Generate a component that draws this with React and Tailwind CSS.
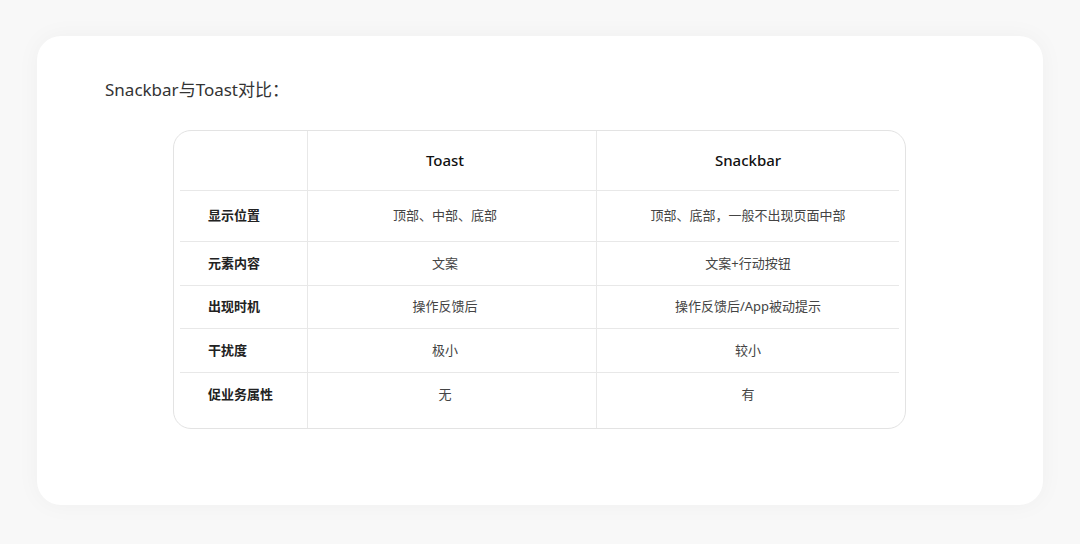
const rows = [
  ["显示位置", "顶部、中部、底部", "顶部、底部，一般不出现页面中部", "h-[51px]", ""],
  ["元素内容", "文案", "文案+行动按钮", "h-[44px]", ""],
  ["出现时机", "操作反馈后", "操作反馈后/App被动提示", "h-[43px]", ""],
  ["干扰度", "极小", "较小", "h-[44px]", ""],
  ["促业务属性", "无", "有", "h-[57px]", "pb-[13px]"],
];

export default function App() {
  return (
    <div
      className="w-[1080px] h-[544px] bg-[#f8f8f8] pt-[36px] pl-[37px]"
      style={{ fontFamily: '"Noto Sans", "Noto Sans CJK SC", sans-serif' }}
    >
      <div className="w-[1006px] h-[469px] bg-white rounded-[24px] shadow-[0_0_24px_rgba(0,0,0,0.04)] pt-[41px] pl-[68px]">
        <div className="text-[17px] text-[#333] leading-[26px]">Snackbar与Toast对比：</div>
        <div className="mt-[27px] ml-[68px] w-[733px] h-[299px] border border-[#e3e3e3] rounded-[18px] px-[6px] overflow-hidden">
          <div className="grid grid-cols-[128px_289px_302px] h-[60px] border-b border-[#e8e8e8] text-[15px] font-medium text-[#111]">
            <div className="border-r border-[#e8e8e8]" />
            <div className="border-r border-[#e8e8e8] flex items-center justify-center pr-[14px]">Toast</div>
            <div className="flex items-center justify-center">Snackbar</div>
          </div>
          {rows.map((r, i) => (
            <div
              key={i}
              className={`grid grid-cols-[128px_289px_302px] text-[13px] ${i < rows.length - 1 ? "border-b border-[#e8e8e8]" : ""} ${r[3]}`}
            >
              <div className={`border-r border-[#e8e8e8] flex items-center pl-[28px] font-bold text-[#222] ${r[4]}`}>{r[0]}</div>
              <div className={`border-r border-[#e8e8e8] flex items-center justify-center pr-[14px] text-[#444] ${r[4]}`}>{r[1]}</div>
              <div className={`flex items-center justify-center text-[#444] ${r[4]}`}>{r[2]}</div>
            </div>
          ))}
        </div>
      </div>
    </div>
  );
}
